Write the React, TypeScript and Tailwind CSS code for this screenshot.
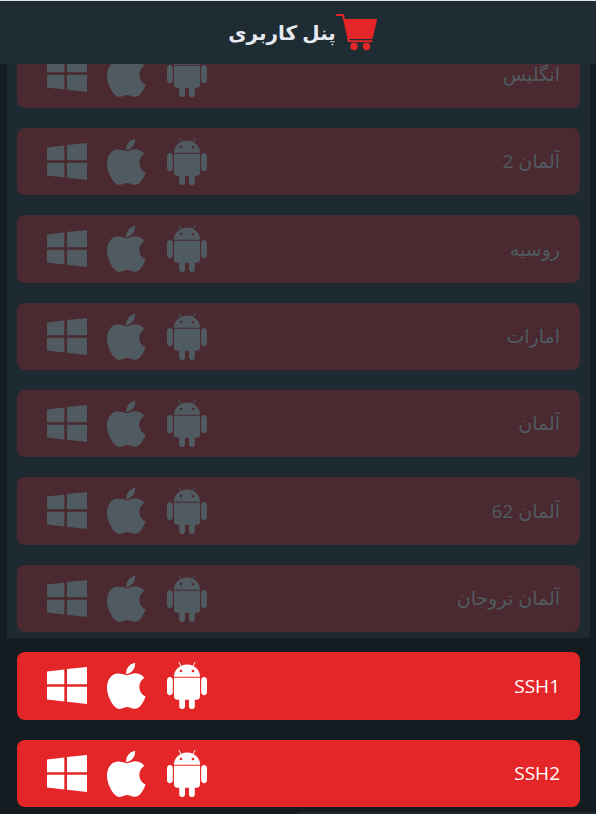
interface Server {
  name: string;
  active: boolean;
}

const servers: Server[] = [
  { name: "انگلیس", active: false },
  { name: "آلمان 2", active: false },
  { name: "روسیه", active: false },
  { name: "امارات", active: false },
  { name: "آلمان", active: false },
  { name: "آلمان 62", active: false },
  { name: "آلمان تروجان", active: false },
  { name: "SSH1", active: true },
  { name: "SSH2", active: true },
];

function CartIcon() {
  return (
    <svg viewBox="0 0 42 38" fill="none" className="h-auto w-[42px] text-[#e52629]" aria-hidden>
      <path
        d="M1 1H7L12.500 24C11.500 26 12.300 27.300 14 27.300H35.500"
        stroke="currentColor"
        strokeWidth="2"
        strokeLinecap="round"
        strokeLinejoin="round"
      />
      <path d="M8 5H41.200L36.500 25H12.700Z" fill="currentColor" />
      <circle cx="18" cy="32.500" r="3.700" fill="currentColor" />
      <circle cx="30.500" cy="32.500" r="3.700" fill="currentColor" />
    </svg>
  );
}

function AndroidIcon() {
  return (
    <svg viewBox="0 125 1408 1669" fill="currentColor" fillRule="evenodd" className="h-auto w-10" aria-hidden>
      <path d="M493 394a48 48 0 1 0 0 96 48 48 0 1 0 0-96zM915 394a48 48 0 1 0 0 96 48 48 0 1 0 0-96zM103 657q42 0 72 30t30 72v430q0 43-29.5 73t-72.5 30-73-30-30-73v-430q0-42 30-72t73-30zm1060 19v666q0 46-32 78t-77 32h-75v227q0 43-30 73t-73 30-73-30-30-73v-227h-138v227q0 43-30 73t-73 30q-42 0-72-30t-30-73l-1-227h-74q-46 0-78-32t-32-78v-666h918zm-232-405q107 55 171 153.5t64 215.5h-925q0-117 64-215.5t172-153.5l-71-131q-7-13 5-20 13-6 20 6l72 132q95-42 201-42t201 42l72-132q7-12 20-6 12 7 5 20zm477 488v430q0 43-30 73t-73 30q-42 0-72-30t-30-73v-430q0-43 30-72.5t72-29.5q43 0 73 29.5t30 72.5z" />
    </svg>
  );
}

function AppleIcon() {
  return (
    <svg viewBox="0 -30 1444 1711" fill="currentColor" className="h-auto w-10" aria-hidden>
      <path d="M1393 1215q-39 125-123 250-129 196-257 196-49 0-140-32-86-32-151-32-61 0-142 33-81 34-132 34-152 0-301-259-147-261-147-503 0-228 113-374 113-144 284-144 72 0 177 30 104 30 138 30 45 0 143-34 102-34 173-34 119 0 213 65 52 36 104 100-79 67-114 118-65 94-65 207 0 124 69 223t158 126zm-376-1173q0 61-29 136-30 75-93 138-54 54-108 72-37 11-104 17 3-149 78-257 74-107 250-148 1 3 2.500 11t2.500 11q0 4 .5 10t.5 10z" />
    </svg>
  );
}

function WindowsIcon() {
  return (
    <svg viewBox="0 0 27 32" fill="currentColor" className="h-auto w-10" aria-hidden>
      <path d="M0 6.400L11.700 5V15.100H0ZM13.500 4.800L27 3.300V15.100H13.500ZM0 16.700H11.700V26.600L0 25.300ZM13.500 16.700H27V28.300L13.500 26.800Z" />
    </svg>
  );
}

function ServerCard({ name, active }: Server) {
  return (
    <li
      className={`flex items-center justify-between rounded-lg py-2.5 pr-5 pl-[30px] text-[19px] ${
        active ? "bg-[#e52629] text-white" : "bg-[#4a2a30] text-[#505a61]"
      }`}
    >
      <span>{name}</span>
      <div className="flex gap-5">
        <a href="#android" aria-label={`${name} Android`}>
          <AndroidIcon />
        </a>
        <a href="#apple" aria-label={`${name} iOS`}>
          <AppleIcon />
        </a>
        <a href="#windows" aria-label={`${name} Windows`}>
          <WindowsIcon />
        </a>
      </div>
    </li>
  );
}

export default function App() {
  const inactive = servers.filter((s) => !s.active);
  const active = servers.filter((s) => s.active);

  return (
    <div
      dir="rtl"
      className="flex h-screen flex-col overflow-hidden bg-[#141c22] font-['Open_Sans','DejaVu_Sans',sans-serif]"
    >
      <header className="z-10 flex h-16 shrink-0 items-center justify-center border-t border-[#dfe5e5] bg-[#202c34] pl-2.5">
        <CartIcon />
        <h1 className="text-xl font-bold text-[#e4eaf0]">پنل کاربری</h1>
      </header>
      <main className="flex min-h-0 flex-1 flex-col justify-end overflow-hidden pr-1.5 pb-[5px] pl-[7px]">
        <ul className="flex flex-col gap-5 bg-[#1e2a31] px-2.5 pb-1.5">
          {inactive.map((server) => (
            <ServerCard key={server.name} {...server} />
          ))}
        </ul>
        <ul className="flex flex-col gap-5 px-2.5 pt-3.5">
          {active.map((server) => (
            <ServerCard key={server.name} {...server} />
          ))}
        </ul>
      </main>
      <div className="h-0.5 w-1/2 shrink-0 bg-[#1e2a31]" />
    </div>
  );
}
